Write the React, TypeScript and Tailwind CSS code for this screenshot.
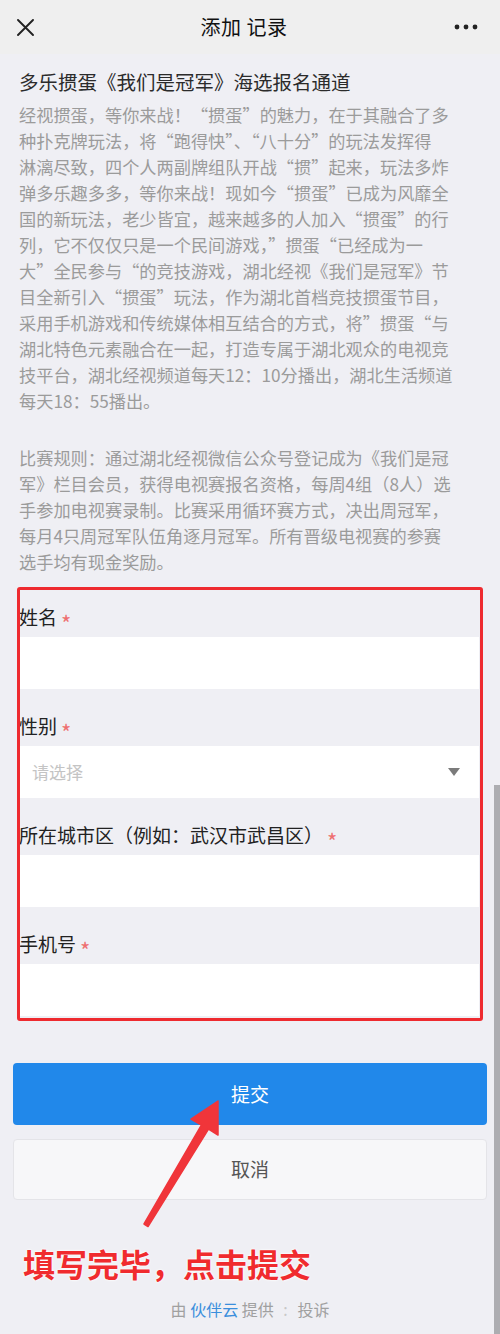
import React from 'react';

const introLines = [
  '经视掼蛋，等你来战！“掼蛋”的魅力，在于其融合了多',
  '种扑克牌玩法，将“跑得快”、“八十分”的玩法发挥得',
  '淋漓尽致，四个人两副牌组队开战“掼”起来，玩法多炸',
  '弹多乐趣多多，等你来战！现如今“掼蛋”已成为风靡全',
  '国的新玩法，老少皆宜，越来越多的人加入“掼蛋”的行',
  '列，它不仅仅只是一个民间游戏，”掼蛋“已经成为一',
  '大”全民参与“的竞技游戏，湖北经视《我们是冠军》节',
  '目全新引入“掼蛋”玩法，作为湖北首档竞技掼蛋节目，',
  '采用手机游戏和传统媒体相互结合的方式，将”掼蛋“与',
  '湖北特色元素融合在一起，打造专属于湖北观众的电视竞',
  '技平台，湖北经视频道每天12：10分播出，湖北生活频道',
  '每天18：55播出。',
];

const ruleLines = [
  '比赛规则：通过湖北经视微信公众号登记成为《我们是冠',
  '军》栏目会员，获得电视赛报名资格，每周4组（8人）选',
  '手参加电视赛录制。比赛采用循环赛方式，决出周冠军，',
  '每月4只周冠军队伍角逐月冠军。所有晋级电视赛的参赛',
  '选手均有现金奖励。',
];

const Field: React.FC<{ label: string; select?: boolean }> = ({ label, select }) => (
  <div>
    <div className="h-[57px] flex items-end pb-[7px]">
      <span className="text-[19px] leading-[26px] text-[#222]">{label}</span>
      <span className="relative top-[5px] ml-[4px] text-[22px] leading-[26px] text-[#ee7070]">*</span>
    </div>
    <div className="h-[52px] bg-white flex items-center justify-between px-[13px]">
      {select && (
        <>
          <span className="text-[17px] text-[#c4c4c4]">请选择</span>
          <span className="w-0 h-0 mr-[6px] border-l-[6px] border-r-[6px] border-t-[8px] border-l-transparent border-r-transparent border-t-[#7b7b7b]" />
        </>
      )}
    </div>
  </div>
);

export default function App() {
  return (
    <div className="relative w-[500px] min-h-[1334px] bg-[#efeff4] font-['Noto_Sans_CJK_SC','Noto_Sans',sans-serif] overflow-hidden">
      <header className="h-[54px] bg-[#efefef] flex items-center justify-between pl-[17px] pr-[22px]">
        <svg width="17" height="17" viewBox="0 0 17 17" className="text-[#222]">
          <path d="M1 1L16 16M16 1L1 16" stroke="currentColor" strokeWidth="1.9" strokeLinecap="round" />
        </svg>
        <h1 className="text-[20px] font-normal text-[#111] tracking-[0.5px]">添加 记录</h1>
        <svg width="24" height="6" viewBox="0 0 24 6" className="text-[#222]">
          <circle cx="3" cy="3" r="2.4" fill="currentColor" />
          <circle cx="12" cy="3" r="2.4" fill="currentColor" />
          <circle cx="21" cy="3" r="2.4" fill="currentColor" />
        </svg>
      </header>

      <main className="px-[19px] pr-[21px]">
        <h2 className="mt-[14px] text-[19.5px] leading-[28px] text-[#2b2b2b]">多乐掼蛋《我们是冠军》海选报名通道</h2>
        <div className="mt-[6px] text-[17.2px] leading-[26px] text-[#9b9b9b] whitespace-nowrap">
          {introLines.map((l, i) => (
            <div key={i}>{l}</div>
          ))}
        </div>
        <div className="mt-[31px] text-[17.2px] leading-[26px] text-[#9b9b9b] whitespace-nowrap">
          {ruleLines.map((l, i) => (
            <div key={i}>{l}</div>
          ))}
        </div>

        <form className="mt-[5px]">
          <Field label="姓名" />
          <Field label="性别" select />
          <Field label="所在城市区（例如：武汉市武昌区）" />
          <Field label="手机号" />
        </form>
      </main>

      <div className="px-[13px] mt-[47px] flex flex-col gap-[14px]">
        <button className="h-[62px] w-full rounded-[4px] bg-[#2188ea] text-white text-[19px]">提交</button>
        <button className="h-[61px] w-full rounded-[4px] bg-[#f7f7f9] border border-[#e4e4e8] text-[#555] text-[19px]">取消</button>
      </div>

      <p className="mt-[43px] pl-[23px] text-[32px] leading-[40px] font-bold text-[#f02b2e] [text-shadow:0_0_3px_#fff,0_0_2px_#fff]">
        填写完毕，点击提交
      </p>

      <footer className="mt-[15px] text-center text-[16px] leading-[22px] text-[#a0a0a0]">
        由 <span className="text-[#3a8edc]">伙伴云</span> 提供 <span className="mx-[6px] text-[#c8c8c8]">:</span> 投诉
      </footer>

      {/* annotation overlays */}
      <div className="absolute left-[17px] top-[587px] w-[466px] h-[434px] border-[3px] border-[#ee2a2f] rounded-[3px] pointer-events-none" />
      <svg className="absolute left-[130px] top-[1090px] pointer-events-none" width="110" height="150" viewBox="0 0 110 150">
        <polygon
          points="88,11 61,29 71.5,35 14,134 18,136.5 78.5,39 88,45"
          fill="#f0353a"
          stroke="#f0353a"
          strokeWidth="1.5"
          strokeLinejoin="round"
        />
      </svg>
      <div className="absolute right-0 top-[785px] w-[6px] h-[549px] bg-[#adadb1]" />
    </div>
  );
}
